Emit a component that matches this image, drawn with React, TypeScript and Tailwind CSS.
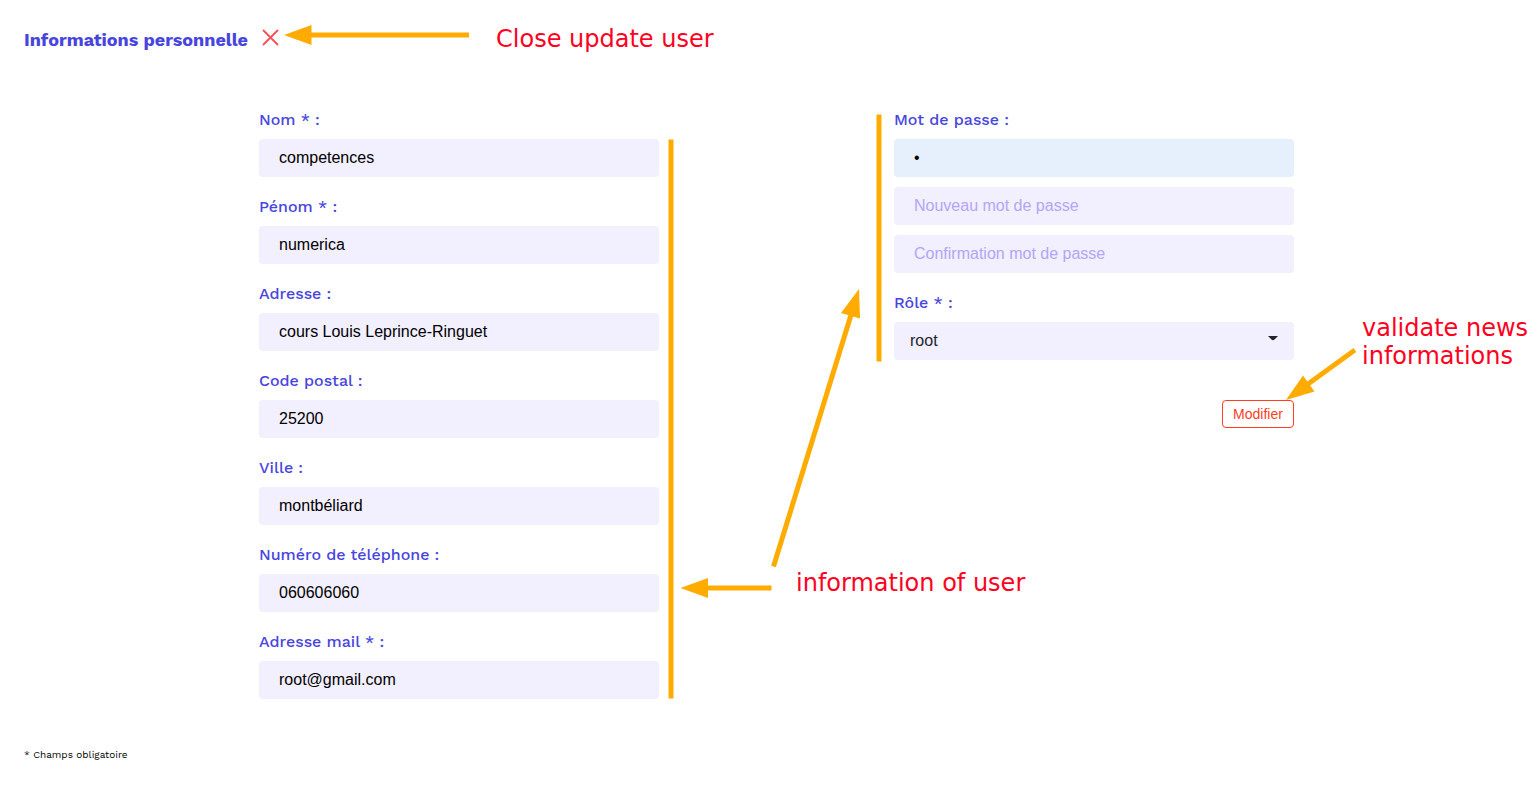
import type { ReactNode } from "react";

const fieldClass =
  "block h-[38px] w-full rounded border-0 px-5 font-['Liberation_Sans',sans-serif] text-base text-black outline-none placeholder:text-[#b3a5f9] placeholder:opacity-100";

const leftFields = [
  { id: "nom", label: "Nom * :", type: "text", value: "competences" },
  { id: "prenom", label: "Pénom * :", type: "text", value: "numerica" },
  { id: "adresse", label: "Adresse :", type: "text", value: "cours Louis Leprince-Ringuet" },
  { id: "code-postal", label: "Code postal :", type: "text", value: "25200" },
  { id: "ville", label: "Ville :", type: "text", value: "montbéliard" },
  { id: "telephone", label: "Numéro de téléphone :", type: "tel", value: "060606060" },
  { id: "mail", label: "Adresse mail * :", type: "email", value: "root@gmail.com" },
];

function FieldLabel({ htmlFor, children }: { htmlFor: string; children: ReactNode }) {
  return (
    <label htmlFor={htmlFor} className="mb-[7px] block text-base leading-6 font-medium text-[#4845de]">
      {children}
    </label>
  );
}

function Note({ className = "", children }: { className?: string; children: ReactNode }) {
  return (
    <p className={`font-['DejaVu_Sans',sans-serif] text-2xl leading-7 whitespace-nowrap text-[#ff0022] ${className}`}>
      {children}
    </p>
  );
}

function CloseArrow() {
  return (
    <svg width="186" height="20" viewBox="0 0 186 20" fill="#ffab00" aria-hidden="true" className="shrink-0">
      <path d="M0 10 27.5 0V7.5H185V12.5H27.5V20Z" />
    </svg>
  );
}

function UserInfoArrows() {
  return (
    <svg
      width="220"
      height="600"
      viewBox="0 0 220 600"
      fill="#ffab00"
      aria-hidden="true"
      className="pointer-events-none absolute top-0 left-full"
    >
      <rect x="9.5" y="31.5" width="5" height="559" />
      <path d="M21.5 480 49 470V477.5H112.5V482.5H49V490Z" />
      <path d="M200 181 182 205 201 210.5Z" />
      <path d="M192 207 114.5 458.5" stroke="#ffab00" strokeWidth="5" />
    </svg>
  );
}

function ValidateArrow() {
  return (
    <svg
      width="72"
      height="54"
      viewBox="0 0 72 54"
      fill="#ffab00"
      aria-hidden="true"
      className="pointer-events-none absolute -top-[52px] left-[62px]"
    >
      <path d="M2 52 19 27.5 30.5 43.5Z" />
      <path d="M24 36 71 2" stroke="#ffab00" strokeWidth="5" />
    </svg>
  );
}

export default function App() {
  return (
    <main className="overflow-x-hidden bg-white pt-6 pr-[10px] pb-7 pl-6 font-['Work_Sans','Inter',sans-serif]">
      <header className="flex h-8 items-center">
        <h1 className="text-lg leading-8 font-bold whitespace-nowrap text-[#4845de]">Informations personnelle</h1>
        <button type="button" aria-label="Fermer" className="ml-3 shrink-0 pb-1">
          <svg width="20" height="20" viewBox="0 0 20 20" fill="none" stroke="#ff4d55" strokeWidth="1.8" strokeLinecap="round">
            <path d="M3.5 2.5 17.5 16.5M17.5 2.5 3.5 16.5" />
          </svg>
        </button>
        <div className="ml-1 flex items-center pb-[10px]">
          <CloseArrow />
          <Note className="ml-[26px] pt-2">Close update user</Note>
        </div>
      </header>

      <form className="mt-[52px] flex justify-evenly" onSubmit={(e) => e.preventDefault()}>
        <div className="relative flex w-[400px] flex-col gap-[18px]">
          {leftFields.map((field) => (
            <div key={field.id}>
              <FieldLabel htmlFor={field.id}>{field.label}</FieldLabel>
              <input id={field.id} type={field.type} defaultValue={field.value} className={`${fieldClass} bg-[#f2efff]`} />
            </div>
          ))}
          <UserInfoArrows />
          <Note className="absolute top-[461px] left-[537px]">information of user</Note>
        </div>

        <div className="relative w-[400px]">
          <svg
            width="18"
            height="256"
            viewBox="0 0 18 256"
            fill="#ffab00"
            aria-hidden="true"
            className="pointer-events-none absolute top-0 right-full"
          >
            <rect x="0.5" y="6.5" width="5" height="247" />
          </svg>
          <FieldLabel htmlFor="password">Mot de passe :</FieldLabel>
          <div className="flex flex-col gap-[10px]">
            <input id="password" type="password" defaultValue="a" className={`${fieldClass} bg-[#e6f0fd]`} />
            <input
              type="password"
              aria-label="Nouveau mot de passe"
              placeholder="Nouveau mot de passe"
              className={`${fieldClass} bg-[#f2efff]`}
            />
            <input
              type="password"
              aria-label="Confirmation mot de passe"
              placeholder="Confirmation mot de passe"
              className={`${fieldClass} bg-[#f2efff]`}
            />
          </div>

          <div className="mt-[18px]">
            <FieldLabel htmlFor="role">Rôle * :</FieldLabel>
            <div className="relative">
              <select
                id="role"
                defaultValue="root"
                className="block h-[38px] w-full appearance-none rounded bg-[#f2efff] px-4 font-['Liberation_Sans',sans-serif] text-base text-[#212529] outline-none"
              >
                <option value="root">root</option>
              </select>
              <svg
                width="10"
                height="5"
                viewBox="0 0 10 5"
                fill="#212529"
                aria-hidden="true"
                className="pointer-events-none absolute top-[14px] right-4"
              >
                <path d="M0 0H10L6.5 3.5Q5 5 3.5 3.5Z" />
              </svg>
            </div>
          </div>

          <div className="mt-10 flex justify-end">
            <div className="relative">
              <button
                type="submit"
                className="block h-7 w-[72px] rounded border border-[#ff3d1f] bg-white font-['Liberation_Sans',sans-serif] text-sm text-[#ff3d1f]"
              >
                Modifier
              </button>
              <ValidateArrow />
              <Note className="absolute -top-[86px] left-[140px]">
                validate news
                <br />
                informations
              </Note>
            </div>
          </div>
        </div>
      </form>

      <p className="mt-12 text-[10px] leading-4 text-black">* Champs obligatoire</p>
    </main>
  );
}
